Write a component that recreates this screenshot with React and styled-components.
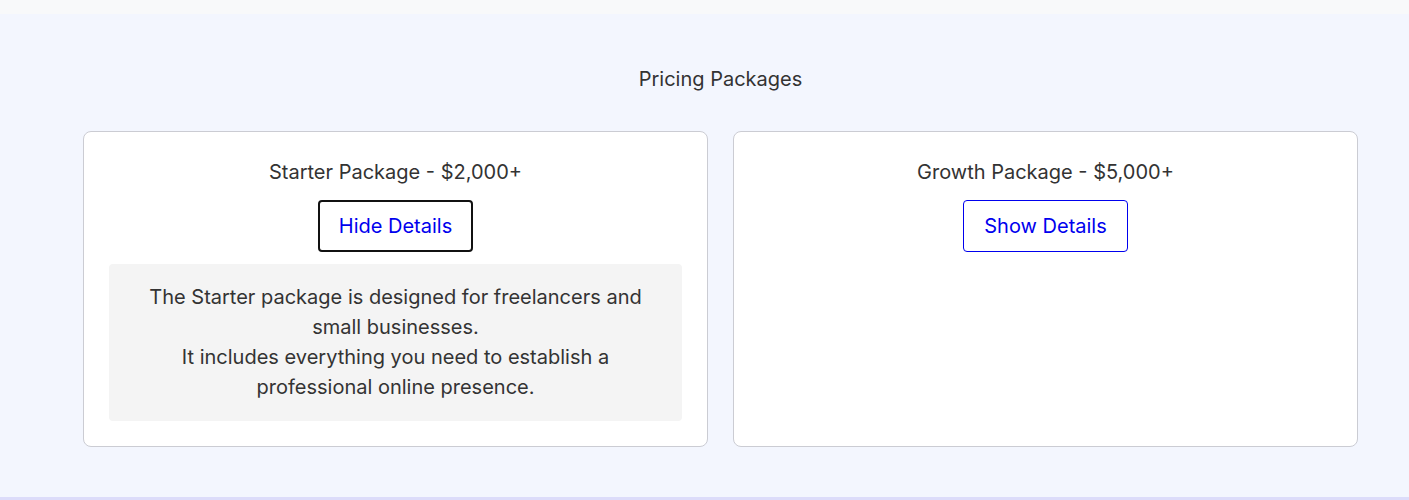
import React, { useState } from "react";
import styled, { createGlobalStyle } from "styled-components";

const Global = createGlobalStyle`
  html, body { margin: 0; padding: 0; background: #f8f9fa; }
  body { font-family: Inter, "Noto Sans", sans-serif; color: #333; }
`;

const TopStrip = styled.div`
  height: 14px;
  background: #f8f9fa;
`;

const Section = styled.section`
  background: #f3f6fe;
  padding: 50px 51px 50px 83px;
  border-bottom: 3px solid #dcdcfa;
`;

const Title = styled.h2`
  margin: 0 0 37px;
  text-align: center;
  font-size: 20px;
  font-weight: 400;
  line-height: 30px;
  color: #333;
`;

const Grid = styled.div`
  display: grid;
  grid-template-columns: 1fr 1fr;
  gap: 25px;
`;

const Card = styled.div`
  background: #fff;
  border: 1px solid #cbccd3;
  border-radius: 8px;
  padding: 25px;
  display: flex;
  flex-direction: column;
  align-items: center;
`;

const CardTitle = styled.h3`
  margin: 0 0 13px;
  font-size: 20px;
  font-weight: 400;
  line-height: 30px;
  color: #333;
  text-align: center;
`;

const ToggleButton = styled.button`
  height: 52px;
  padding: 0 ${(p) => (p.$active ? 19 : 20)}px;
  background: #fff;
  color: #0000ee;
  font-family: Inter, "Noto Sans", sans-serif;
  font-size: 20px;
  border: ${(p) => (p.$active ? "2px solid #111" : "1px solid #0000ee")};
  border-radius: 4px;
  cursor: pointer;
`;

const Details = styled.div`
  align-self: stretch;
  margin-top: 12px;
  background: #f4f4f4;
  border-radius: 4px;
  padding: 18px 24px 19px;
  text-align: center;
  font-size: 20px;
  line-height: 30px;
  color: #333;
`;

const packages = [
  {
    name: "Starter Package - $2,000+",
    lines: [
      "The Starter package is designed for freelancers and small businesses.",
      "It includes everything you need to establish a professional online presence.",
    ],
  },
  {
    name: "Growth Package - $5,000+",
    lines: [
      "The Growth package is designed for growing businesses.",
      "It includes advanced features to scale your online presence.",
    ],
  },
];

export default function App() {
  const [open, setOpen] = useState({ 0: true });
  return (
    <>
      <Global />
      <TopStrip />
      <Section>
        <Title>Pricing Packages</Title>
        <Grid>
          {packages.map((p, i) => (
            <Card key={p.name}>
              <CardTitle>{p.name}</CardTitle>
              <ToggleButton
                $active={!!open[i]}
                onClick={() => setOpen({ ...open, [i]: !open[i] })}
              >
                {open[i] ? "Hide Details" : "Show Details"}
              </ToggleButton>
              {open[i] && (
                <Details>
                  {p.lines[0]}
                  <br />
                  {p.lines[1]}
                </Details>
              )}
            </Card>
          ))}
        </Grid>
      </Section>
    </>
  );
}
